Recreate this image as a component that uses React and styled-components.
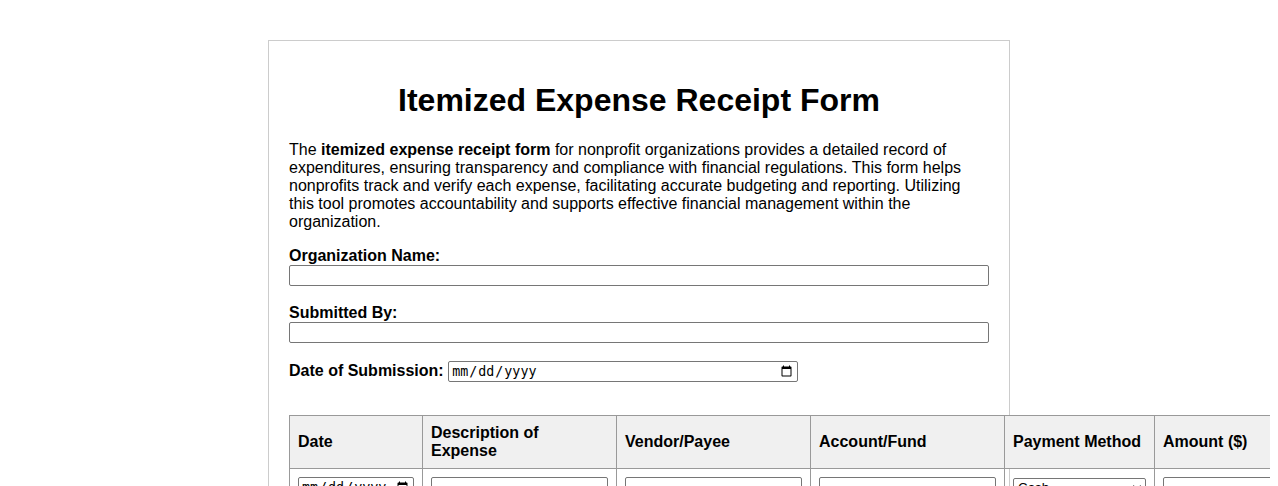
import React from "react"
import styled, { createGlobalStyle } from "styled-components"

const GlobalStyle = createGlobalStyle`
  html {
    overflow: hidden;
  }
  body {
    margin: 8px;
    font-family: "Liberation Sans", Arial, sans-serif;
    color: #000;
    background: #fff;
  }
`

const Container = styled.div`
  max-width: 700px;
  margin: 32px auto;
  padding: 20px;
  border: 1px solid #ccc;
  background: #fff;
`

const Title = styled.h1`
  font-size: 32px;
  text-align: center;
  margin: 21px 0;
`

const Intro = styled.p`
  font-size: 16px;
  line-height: 18px;
  margin: 16px 0 15px;
  padding-top: 1px;
`

const FormGroup = styled.div`
  margin-bottom: 17px;
  padding-top: ${props => (props.$inline ? "1px" : "0")};
`

const Label = styled.label`
  display: ${props => (props.$inline ? "inline" : "block")};
  font-weight: bold;
  font-size: 16px;
  line-height: 18px;
  margin-bottom: ${props => (props.$inline ? "0" : "1px")};
  position: relative;
  top: ${props => (props.$inline ? "0" : "1px")};
`

const TextInput = styled.input`
  box-sizing: border-box;
  width: 100%;
  height: 21px;
  font-size: 13.33px;
  padding: 1px 2px;
  border: 1px solid #767676;
  border-radius: 2px;
`

const DateInput = styled.input`
  box-sizing: border-box;
  width: ${props => props.$width || "100%"};
  height: 21px;
  font-size: 13.33px;
  padding: 1px 2px;
  border: 1px solid #767676;
  border-radius: 2px;
`

const Select = styled.select`
  box-sizing: border-box;
  width: 100%;
  height: 20px;
  font-size: 13.33px;
  border: 1px solid #767676;
  border-radius: 2px;
  background: #fff;
`

const Table = styled.table`
  border-collapse: collapse;
  table-layout: fixed;
  width: 1015px;
  margin-top: 33px;
`

const Th = styled.th`
  width: ${props => props.$width - 17}px;
  background: #f0f0f0;
  border: 1px solid #999;
  padding: 8px;
  text-align: left;
  font-size: 16px;
  line-height: 18px;
  height: 36px;
`

const Td = styled.td`
  border: 1px solid #999;
  padding: 8px;
`

const columns = [
  { label: "Date", width: 133 },
  { label: "Description of Expense", width: 194 },
  { label: "Vendor/Payee", width: 194 },
  { label: "Account/Fund", width: 194 },
  { label: "Payment Method", width: 150 },
  { label: "Amount ($)", width: 150 },
]

const App = () => (
  <>
    <GlobalStyle />
    <Container>
      <Title>Itemized Expense Receipt Form</Title>
      <Intro>
        The <strong>itemized expense receipt form</strong> for nonprofit organizations provides a
        detailed record of expenditures, ensuring transparency and compliance with financial
        regulations. This form helps nonprofits track and verify each expense, facilitating
        accurate budgeting and reporting. Utilizing this tool promotes accountability and supports
        effective financial management within the organization.
      </Intro>
      <FormGroup>
        <Label htmlFor="org">Organization Name:</Label>
        <TextInput id="org" type="text" />
      </FormGroup>
      <FormGroup>
        <Label htmlFor="by">Submitted By:</Label>
        <TextInput id="by" type="text" />
      </FormGroup>
      <FormGroup $inline>
        <Label $inline htmlFor="date">Date of Submission:</Label>{" "}
        <DateInput id="date" type="date" $width="350px" />
      </FormGroup>
      <Table>
        <thead>
          <tr>
            {columns.map(c => (
              <Th key={c.label} $width={c.width}>{c.label}</Th>
            ))}
          </tr>
        </thead>
        <tbody>
          <tr>
            <Td><DateInput type="date" /></Td>
            <Td><TextInput type="text" /></Td>
            <Td><TextInput type="text" /></Td>
            <Td><TextInput type="text" /></Td>
            <Td>
              <Select defaultValue="Cash">
                <option>Cash</option>
                <option>Check</option>
                <option>Credit Card</option>
              </Select>
            </Td>
            <Td><TextInput type="number" /></Td>
          </tr>
        </tbody>
      </Table>
    </Container>
  </>
)

export default App
